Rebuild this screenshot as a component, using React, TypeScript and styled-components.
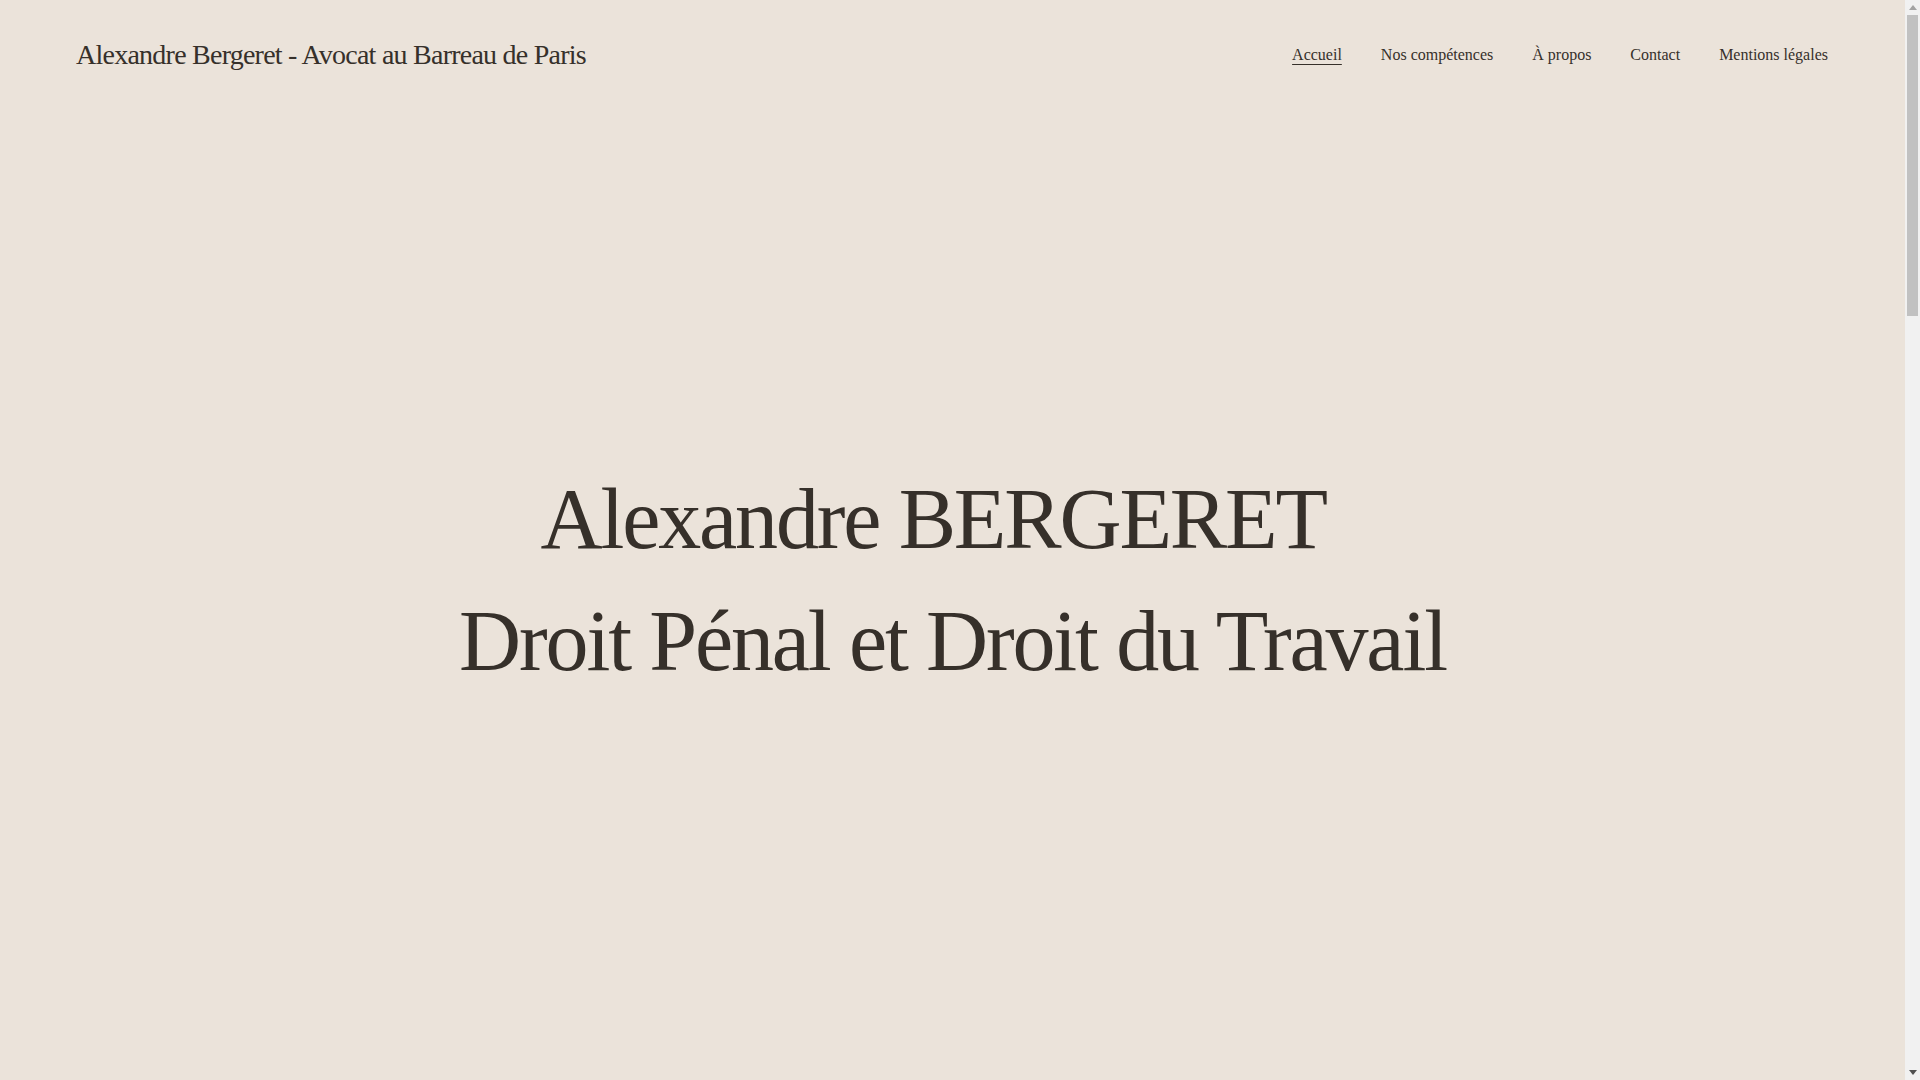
import styled, { createGlobalStyle } from "styled-components";

const GlobalStyle = createGlobalStyle`
  html, body {
    margin: 0;
    padding: 0;
    background: #ebe3da;
  }
  body {
    font-family: "Liberation Serif", "Times New Roman", serif;
    color: #36302a;
  }
  * {
    box-sizing: border-box;
  }
`;

const Page = styled.div`
  display: flex;
  flex-direction: column;
  padding-right: 15px;
  background: #ebe3da;
`;

/* classic browser scrollbar shown in the reference */
const ScrollBar = styled.div`
  position: fixed;
  top: 0;
  right: 0;
  width: 15px;
  height: 100vh;
  background: #f1f1f1;
  display: flex;
  flex-direction: column;
  align-items: center;
`;

const ScrollArrow = styled.div<{ $down?: boolean }>`
  height: 15px;
  width: 15px;
  display: flex;
  align-items: center;
  justify-content: center;
  color: ${({ $down }) => ($down ? "#505050" : "#a3a3a3")};
  margin-top: ${({ $down }) => ($down ? "auto" : "0")};
`;

const ScrollThumb = styled.div`
  width: 11px;
  height: 301px;
  background: #c1c1c1;
`;

const Header = styled.header`
  height: 110px;
  padding: 0 77px 0 76px;
  display: flex;
  align-items: center;
  justify-content: space-between;
`;

const SiteTitle = styled.a`
  font-size: 28px;
  letter-spacing: -0.027em;
  line-height: 1;
  color: #36302a;
  text-decoration: none;
`;

const Nav = styled.nav`
  display: flex;
  align-items: center;
  gap: 39px;
`;

const NavLink = styled.a<{ $active?: boolean }>`
  font-size: 16px;
  color: #36302a;
  text-decoration: ${({ $active }) => ($active ? "underline" : "none")};
  text-decoration-thickness: 1px;
  text-underline-offset: 4px;
`;

const Hero = styled.section`
  height: 940px;
  display: flex;
  align-items: center;
  justify-content: center;
`;

const HeroTitle = styled.h1`
  margin: 0;
  font-weight: 400;
  font-size: 86px;
  line-height: 122px;
  letter-spacing: -0.025em;
  text-align: center;
  color: #36302a;
`;

const HeroLine = styled.span`
  display: block;
  white-space: pre;
`;

const Rest = styled.section`
  height: 2730px;
`;

const links = ["Accueil", "Nos compétences", "À propos", "Contact", "Mentions légales"];

export default function App() {
  return (
    <Page>
      <GlobalStyle />
      <Header>
        <SiteTitle href="#">Alexandre Bergeret - Avocat au Barreau de Paris</SiteTitle>
        <Nav>
          {links.map((label, i) => (
            <NavLink key={label} href="#" $active={i === 0}>
              {label}
            </NavLink>
          ))}
        </Nav>
      </Header>
      <Hero>
        <HeroTitle>
          <HeroLine>{"Alexandre BERGERET\u00a0\u00a0"}</HeroLine>
          <HeroLine>Droit Pénal et Droit du Travail</HeroLine>
        </HeroTitle>
      </Hero>
      <Rest />
      <ScrollBar aria-hidden>
        <ScrollArrow>
          <svg width="8" height="5" viewBox="0 0 8 5">
            <polygon points="4,0 8,5 0,5" fill="currentColor" />
          </svg>
        </ScrollArrow>
        <ScrollThumb />
        <ScrollArrow $down>
          <svg width="8" height="5" viewBox="0 0 8 5">
            <polygon points="0,0 8,0 4,5" fill="currentColor" />
          </svg>
        </ScrollArrow>
      </ScrollBar>
    </Page>
  );
}
